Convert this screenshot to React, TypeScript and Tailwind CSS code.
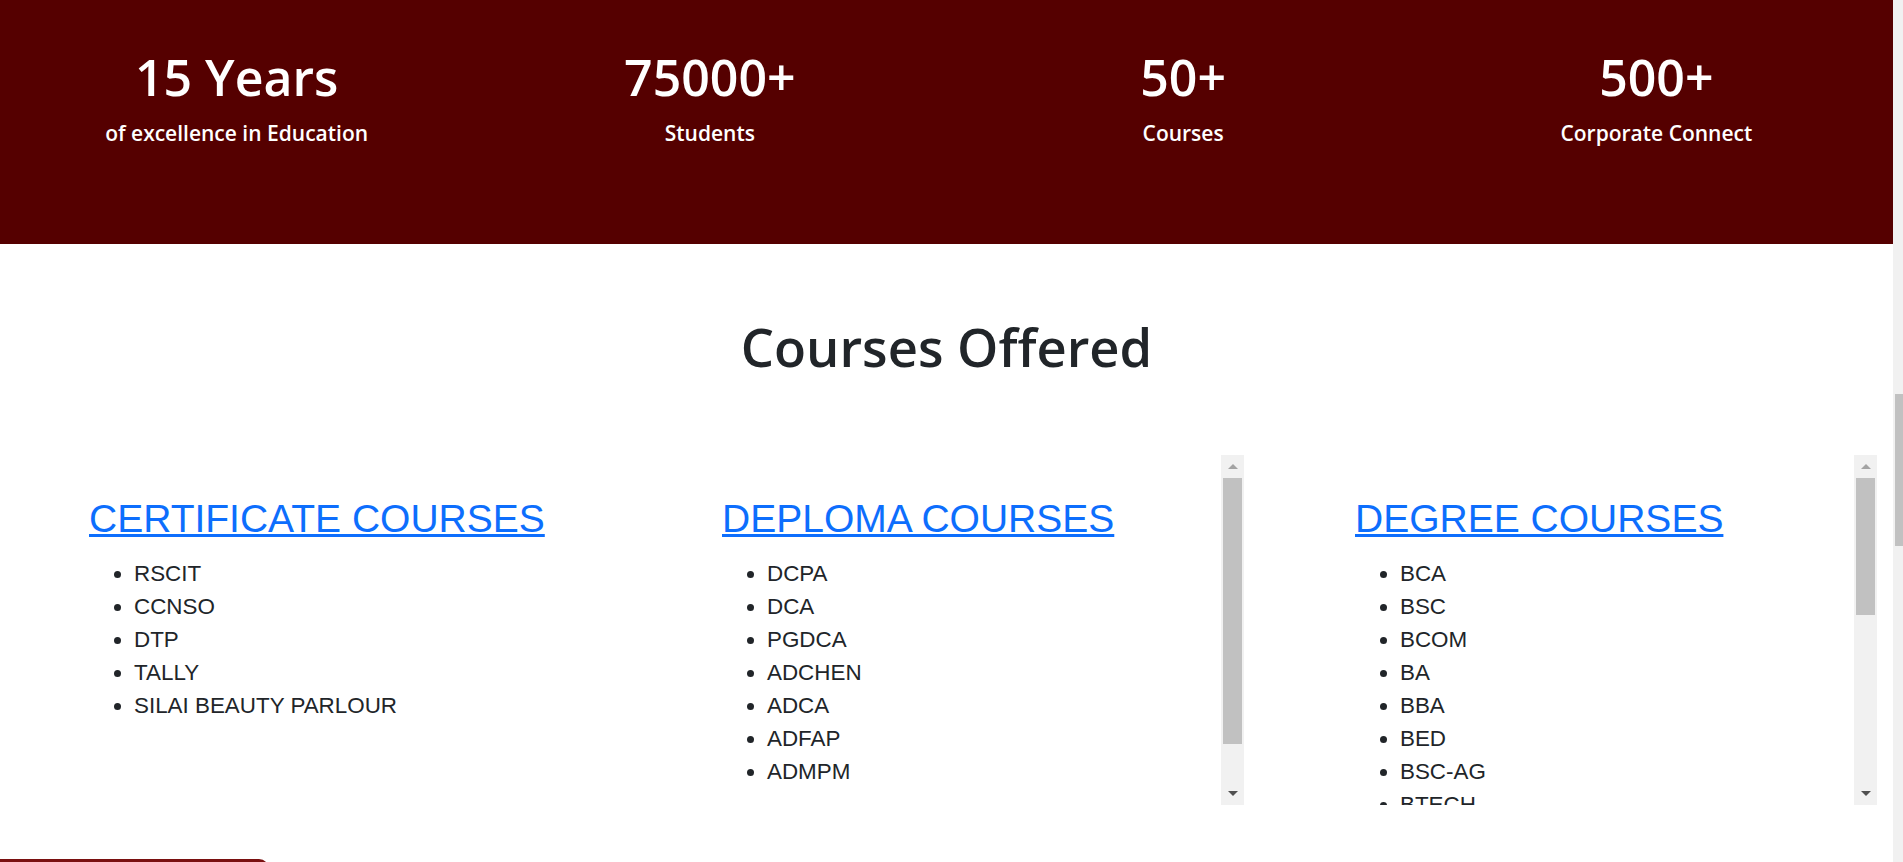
import React from "react";

const stats = [
  { value: "15 Years", label: "of excellence in Education" },
  { value: "75000+", label: "Students" },
  { value: "50+", label: "Courses" },
  { value: "500+", label: "Corporate Connect" },
];

const courseGroups = [
  {
    title: "CERTIFICATE COURSES",
    items: ["RSCIT", "CCNSO", "DTP", "TALLY", "SILAI BEAUTY PARLOUR"],
    thumb: 0,
  },
  {
    title: "DEPLOMA COURSES",
    items: ["DCPA", "DCA", "PGDCA", "ADCHEN", "ADCA", "ADFAP", "ADMPM"],
    thumb: 266,
  },
  {
    title: "DEGREE COURSES",
    items: [
      "BCA",
      "BSC",
      "BCOM",
      "BA",
      "BBA",
      "BED",
      "BSC-AG",
      "BTECH",
      "MCA",
      "MSC",
      "MCOM",
      "MA",
      "MBA",
      "MED",
      "BLIB",
      "MLIB",
      "BPED",
      "LLB",
    ],
    thumb: 137,
  },
];

// grey classic scrollbar drawn next to the list box
function ScrollBar({ thumb }: { thumb: number }) {
  return (
    <div className="flex w-[23px] shrink-0 flex-col bg-[#f1f1f1]">
      <div className="flex h-[23px] items-center justify-center">
        <div className="h-0 w-0 border-x-[5px] border-b-[5px] border-x-transparent border-b-[#a3a3a3]" />
      </div>
      <div className="flex-1">
        <div className="mx-[2px] bg-[#c1c1c1]" style={{ height: thumb }} />
      </div>
      <div className="flex h-[23px] items-center justify-center">
        <div className="h-0 w-0 border-x-[5px] border-t-[5px] border-x-transparent border-t-[#505050]" />
      </div>
    </div>
  );
}

export default function App() {
  return (
    <div className="flex h-[862px] w-full overflow-hidden bg-white">
      <main className="w-[1893px] shrink-0">
        {/* stats banner */}
        <section className="grid h-[244px] grid-cols-4 bg-[#550000] pt-[52px] font-['Open_Sans',sans-serif] text-white">
          {stats.map((s) => (
            <div key={s.value} className="flex flex-col items-center">
              <h3 className="text-[50px] font-semibold leading-none">
                {s.value}
              </h3>
              <p className="mt-[21px] text-[21px] font-semibold leading-none">
                {s.label}
              </p>
            </div>
          ))}
        </section>

        {/* courses */}
        <section>
          <h1 className="mt-[77px] text-center font-['Open_Sans',sans-serif] text-[52.5px] font-semibold leading-none text-[#212529]">
            Courses Offered
          </h1>

          <div className="mt-[81px] flex gap-[34px] pl-[12px] font-['Liberation_Sans',Arial,sans-serif]">
            {courseGroups.map((g) => (
              <div key={g.title} className="flex h-[350px] w-[599px]">
                <div className="flex-1 overflow-hidden pl-[77px] pt-[41px]">
                  <a
                    href="#"
                    className="block text-[39px] leading-[1.2] text-[#0d6efd] underline"
                  >
                    {g.title}
                  </a>
                  <ul className="mt-[15px] list-disc pl-[45px] text-[22.4px] leading-[33px] text-[#212529]">
                    {g.items.map((it) => (
                      <li key={it}>{it}</li>
                    ))}
                  </ul>
                </div>
                {g.thumb > 0 && <ScrollBar thumb={g.thumb} />}
              </div>
            ))}
          </div>

          <div className="mt-[54px] h-[40px] w-[269px] rounded-tr-[10px] bg-[#7a1010]" />
        </section>
      </main>

      {/* page scrollbar */}
      <div className="w-[10px] shrink-0 bg-[#f1f1f1]">
        <div className="mt-[394px] ml-[2px] h-[152px] w-[8px] bg-[#c1c1c1]" />
      </div>
    </div>
  );
}
